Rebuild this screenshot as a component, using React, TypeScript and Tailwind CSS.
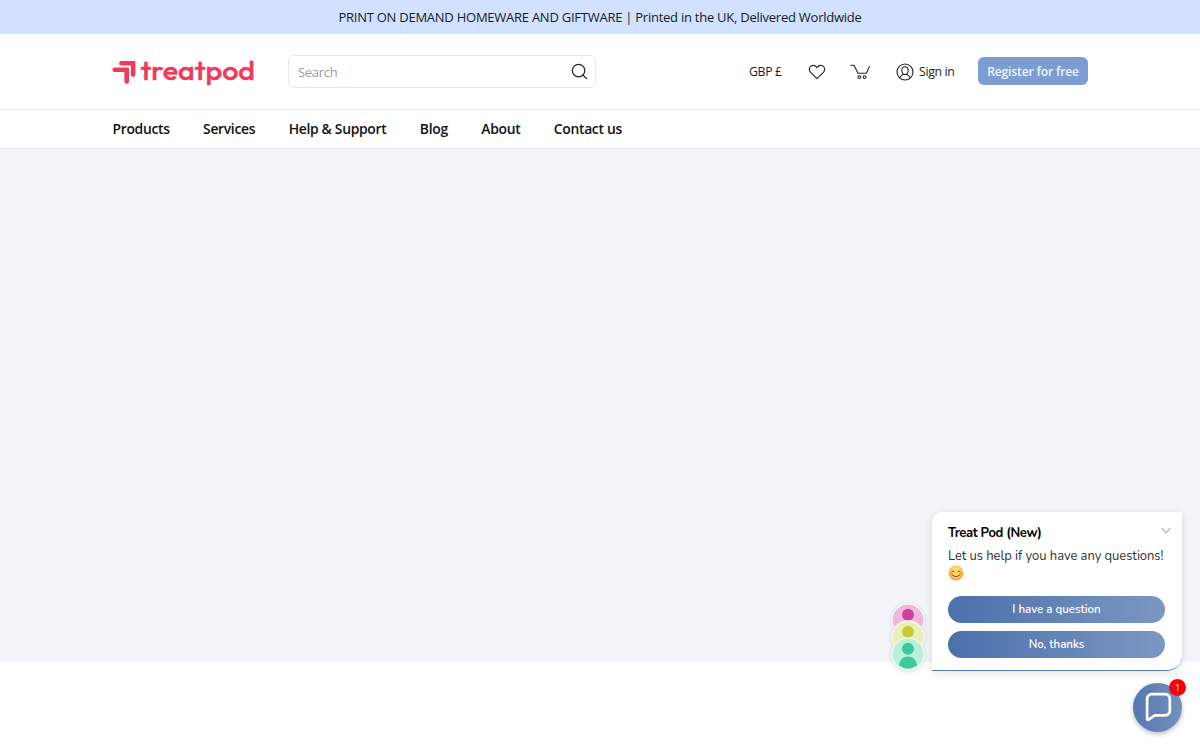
import React from "react";

const navLinks = ["Products", "Services", "Help & Support", "Blog", "About", "Contact us"];

const Logo: React.FC = () => (
  <a href="#" aria-label="treatpod" className="block w-[144px]">
    <svg className="w-[144px] h-[38px] overflow-visible" viewBox="0 -2 144 38">
      <g fill="#ef3b5b">
        <path d="M9.4 6H22.2a1.2 1.2 0 0 1 1.2 1.2V19.6a2.2 2.2 0 0 1-4.6 0V10.6H9.4a2.3 2.3 0 0 1 0-4.6z" />
        <path d="M2.7 12.5H15.8a1.2 1.2 0 0 1 1.2 1.2V26.6a2.2 2.2 0 0 1-4.6 0V17.1H2.7a2.3 2.3 0 0 1 0-4.6z" />
      </g>
      <text
        x="28.5"
        y="24.8"
        textLength="114.5"
        lengthAdjust="spacingAndGlyphs"
        fill="#ef3b5b"
        stroke="#ef3b5b"
        strokeWidth="0.4"
        strokeLinejoin="round"
        className="font-['Outfit','Lexend','Urbanist','Quicksand','Poppins','Inter',sans-serif] text-[27px] font-medium"
      >
        treatpod
      </text>
    </svg>
  </a>
);

const Header: React.FC = () => (
  <header className="bg-white">
    <div className="h-[34px] bg-[#d0e2ff] flex items-center justify-center pt-[2px] text-[13px] tracking-[-0.25px] text-[#151b26]">
      <p>PRINT ON DEMAND HOMEWARE AND GIFTWARE | Printed in the UK, Delivered Worldwide</p>
    </div>

    <div className="h-[76px] border-b border-[#e9eaec] flex items-center pl-28 pr-[112px]">
      <Logo />

      {/* Search */}
      <div className="ml-8 w-[308px] h-[33px] rounded-md border border-[#e8e8e8] flex items-center justify-between pl-[9px] pr-[7px]">
        <span className="pt-[2px] text-[13px] tracking-[-0.3px] text-[#9b9b9b]">Search</span>
        <svg className="w-[17px] h-[17px]" viewBox="0 0 18 18" fill="none" stroke="#222" strokeWidth="1.3">
          <circle cx="8" cy="8" r="6.6" />
          <path strokeLinecap="round" d="M12.7 12.7l3.8 3.8" />
        </svg>
      </div>

      {/* Account */}
      <div className="ml-auto flex items-center text-[12.3px] tracking-[-0.35px] text-[#1c1c1c]">
        <span className="w-[33px] pt-px whitespace-nowrap">GBP £</span>
        <svg className="ml-[26px] w-[18px] h-4" viewBox="0 0 18 16" fill="none" stroke="#222" strokeWidth="1.1">
          <path strokeLinejoin="round" d="M9 14.7L2.6 8.3C1 6.7.9 4.1 2.4 2.6 4 1 6.4.9 7.9 2.5L9 3.6l1.1-1.1C11.6.9 14 1 15.6 2.6c1.5 1.5 1.4 4.1-.2 5.7z" />
        </svg>
        <svg className="ml-6 w-[21px] h-4" viewBox="0 0 21 16" fill="none" stroke="#222" strokeWidth="1.1">
          <path strokeLinecap="round" strokeLinejoin="round" d="M.8 1.2H4L8 9.3h8.4l3-6.7" />
          <circle cx="9.3" cy="13.1" r="1.4" />
          <circle cx="14.6" cy="13.1" r="1.4" />
        </svg>
        <svg className="ml-[25px] w-[18px] h-[18px]" viewBox="0 0 18 18" fill="none" stroke="#222" strokeWidth="1.1">
          <circle cx="9" cy="9" r="8" />
          <path d="M9 3.8c2 0 3.2 1.4 3.2 3.4 0 2.1-1.2 4.3-3.2 4.3S5.8 9.3 5.8 7.2c0-2 1.2-3.4 3.2-3.4zM3.8 15c.2-1.8 1.4-2.3 3.5-3.8M14.2 15c-.2-1.8-1.4-2.3-3.5-3.8" />
        </svg>
        <span className="ml-[5px] w-[36px] pt-px whitespace-nowrap">Sign in</span>
        <button className="ml-[23px] w-[110px] h-7 -mt-px pt-[2px] rounded-md bg-[#7c9dd1] text-[12.2px] tracking-[-0.2px] font-semibold text-[#eef5ff] whitespace-nowrap">
          Register for free
        </button>
      </div>
    </div>

    <nav className="h-[39px] border-b border-[#e4e7eb] flex items-center gap-[33.5px] pl-[112.5px] text-[13.9px] tracking-[-0.32px] font-semibold text-[#111]">
      {navLinks.map((link) => (
        <a key={link} href="#" className="whitespace-nowrap">
          {link}
        </a>
      ))}
    </nav>
  </header>
);

const Avatar: React.FC<{ bg: string; fg: string }> = ({ bg, fg }) => (
  <svg className="w-[34px] h-[34px] -mb-[17px]" viewBox="0 0 34 34">
    <circle cx="17" cy="17" r="16" fill={bg} stroke="#f4f6f6" strokeWidth="1.3" />
    <circle cx="17" cy="11.8" r="6" fill={fg} />
    <path d="M8 28.3c.7-5.6 4.4-8.8 9-8.8s8.3 3.2 9 8.8c-2.5 2-5.5 3.2-9 3.2s-6.5-1.2-9-3.2z" fill={fg} />
  </svg>
);

const Smile: React.FC = () => (
  <svg className="w-4 h-4" viewBox="0 0 16 16" fill="none">
    <defs>
      <radialGradient id="smile" cx="50%" cy="40%" r="60%">
        <stop offset="0.4" stopColor="#ffda68" />
        <stop offset="1" stopColor="#f4a536" />
      </radialGradient>
    </defs>
    <circle cx="8" cy="8" r="7.5" fill="url(#smile)" />
    <circle cx="3.4" cy="9" r="1.5" fill="#f58b45" opacity="0.6" />
    <circle cx="12.6" cy="9" r="1.5" fill="#f58b45" opacity="0.6" />
    <path d="M3.8 6.8q1.3-2.2 2.6 0M9.6 6.8q1.3-2.2 2.6 0M4.3 9.9q3.7 3.6 7.4 0" stroke="#6d4318" strokeWidth="0.9" strokeLinecap="round" />
  </svg>
);

const ChatWidget: React.FC = () => (
  <>
    <div className="absolute left-[891px] top-[603px] flex flex-col drop-shadow-sm">
      <Avatar bg="#efb7dc" fg="#d0419e" />
      <Avatar bg="#ecf0b5" fg="#c5cc39" />
      <Avatar bg="#b8f0dc" fg="#3cc99b" />
    </div>

    <div className="absolute left-[932px] top-[512px] w-[250px] h-[159px] bg-white rounded-tl-[10px] rounded-br-[15px] border-b border-[#557cac] shadow-[0_2px_10px_rgba(0,0,0,0.12)] px-4 pt-[11px] font-['Nunito','Open_Sans',sans-serif]">
      <div className="flex items-center justify-between h-[18px] -mr-[6px]">
        <h2 className="pt-[3px] text-[13px] tracking-[-0.35px] font-bold text-black">Treat Pod (New)</h2>
        <svg className="w-3 h-2 -mt-[3px]" viewBox="0 0 12 8" fill="none" stroke="#c4c4c4" strokeWidth="1.7">
          <path strokeLinecap="round" d="M2 1.5l4 4.3 4-4.3" />
        </svg>
      </div>
      <p className="mt-[5px] h-[18px] leading-[20px] text-[13px] tracking-[-0.06px] text-[#333] whitespace-nowrap">
        Let us help if you have any questions!
      </p>
      <div className="mt-[1px]">
        <Smile />
      </div>
      <div className="mt-[15px] w-[217px] flex flex-col gap-2 text-[11.5px] font-semibold text-white">
        <button className="h-[27px] rounded-full bg-linear-to-r from-[#4b70ab] to-[#7c97c2]">I have a question</button>
        <button className="h-[27px] rounded-full bg-linear-to-r from-[#4b70ab] to-[#7c97c2]">No, thanks</button>
      </div>
    </div>

    <button
      aria-label="Open chat"
      className="absolute left-[1133px] top-[683px] w-[49px] h-[49px] rounded-full bg-linear-to-r from-[#5478b2] to-[#7590bd] shadow-[0_2px_5px_rgba(0,0,0,0.25)] flex items-center justify-center"
    >
      <svg className="w-[30px] h-[31px] ml-[3px] -mt-[2px]" viewBox="0 0 29 29" fill="none" stroke="#fff" strokeWidth="2.6">
        <path strokeLinejoin="round" d="M7.5 2.5h13A4.5 4.5 0 0 1 25 7v11.5a4.5 4.5 0 0 1-4.5 4.5h-10l-5.7 4a1 1 0 0 1-1.8-.8V7a4.5 4.5 0 0 1 4.5-4.5z" />
      </svg>
      <span className="absolute -top-[4px] -right-[4px] w-[17px] h-[17px] rounded-full bg-[#fb0007] font-['Open_Sans',sans-serif] text-[9px] leading-[17px] text-white text-center">
        1
      </span>
    </button>
  </>
);

const App: React.FC = () => {
  return (
    <div className="relative h-[750px] overflow-hidden bg-white font-['Open_Sans',sans-serif]">
      <Header />
      <main className="h-[513px] bg-[#f3f5f8]" />
      <ChatWidget />
    </div>
  );
};

export default App;
